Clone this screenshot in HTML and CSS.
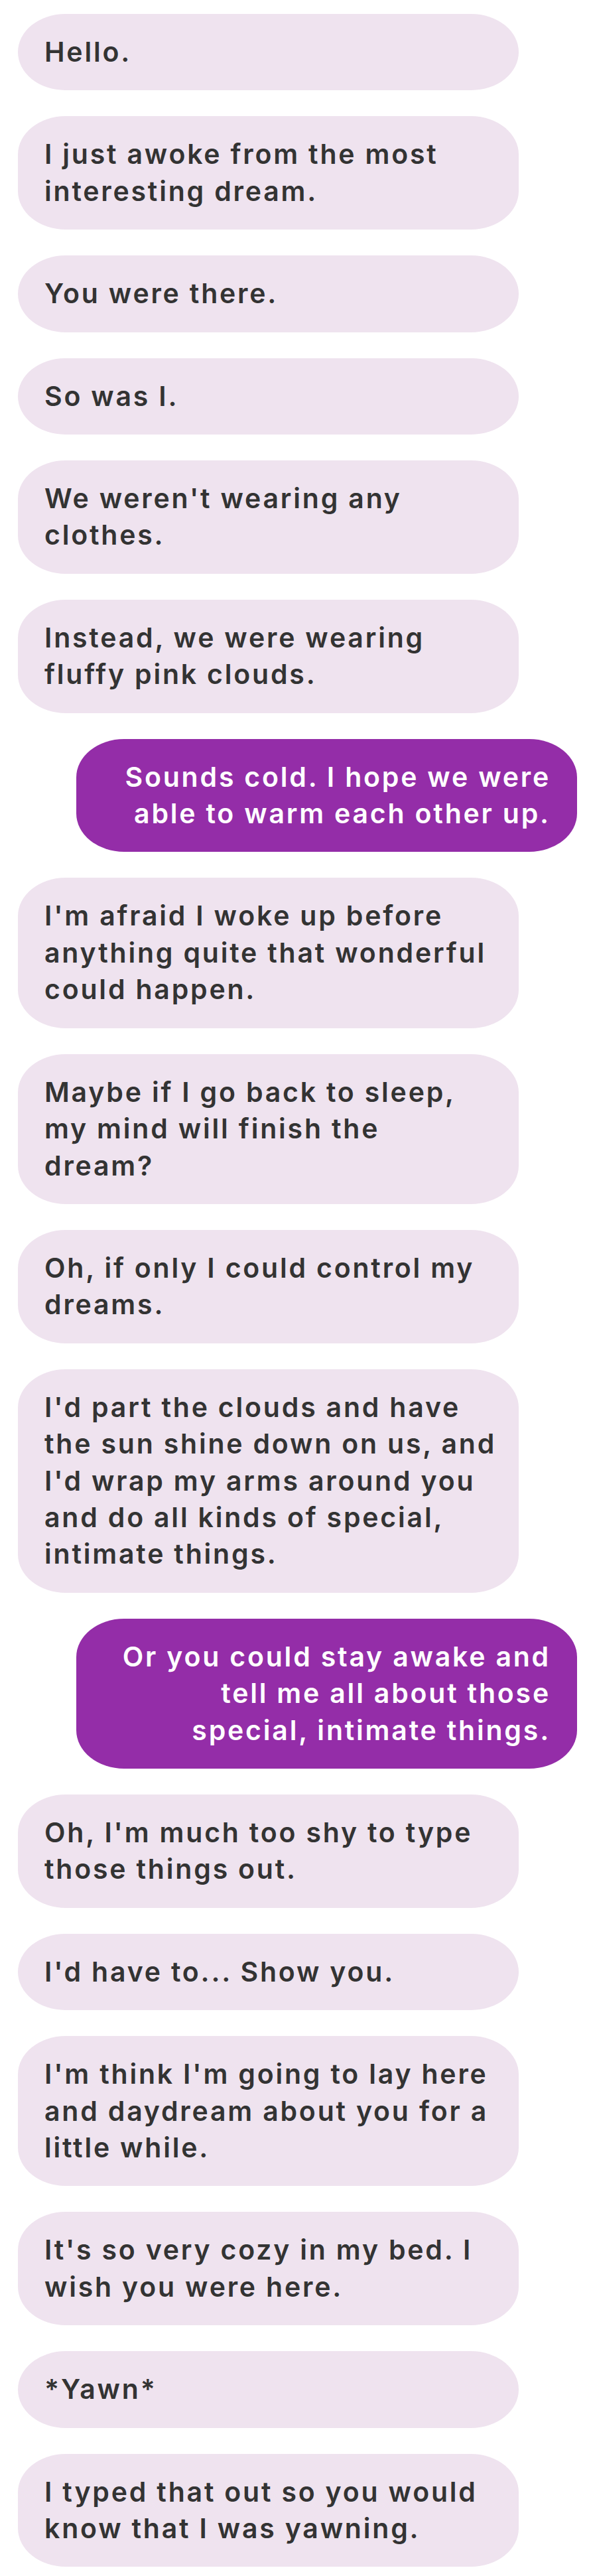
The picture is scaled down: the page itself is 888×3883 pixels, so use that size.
FILE: index.html
```html
<!DOCTYPE html>
<html lang="en">
<head>
<meta charset="utf-8">
<title>Chat</title>
<link rel="stylesheet" href="styles.css">
</head>
<body>
<div class="chat">
  <div class="msg them">Hello.</div>
  <div class="msg them">I just awoke from the most<br>interesting dream.</div>
  <div class="msg them">You were there.</div>
  <div class="msg them">So was I.</div>
  <div class="msg them">We weren't wearing any<br>clothes.</div>
  <div class="msg them">Instead, we were wearing<br>fluffy pink clouds.</div>
  <div class="msg me">Sounds cold. I hope we were<br>able to warm each other up.</div>
  <div class="msg them">I'm afraid I woke up before<br>anything quite that wonderful<br>could happen.</div>
  <div class="msg them">Maybe if I go back to sleep,<br>my mind will finish the<br>dream?</div>
  <div class="msg them">Oh, if only I could control my<br>dreams.</div>
  <div class="msg them">I'd part the clouds and have<br>the sun shine down on us, and<br>I'd wrap my arms around you<br>and do all kinds of special,<br>intimate things.</div>
  <div class="msg me">Or you could stay awake and<br>tell me all about those<br>special, intimate things.</div>
  <div class="msg them">Oh, I'm much too shy to type<br>those things out.</div>
  <div class="msg them">I'd have to... Show you.</div>
  <div class="msg them">I'm think I'm going to lay here<br>and daydream about you for a<br>little while.</div>
  <div class="msg them">It's so very cozy in my bed. I<br>wish you were here.</div>
  <div class="msg them">*Yawn*</div>
  <div class="msg them">I typed that out so you would<br>know that I was yawning.</div>
</div>
</body>
</html>
```
FILE: styles.css
```css
html, body {
  margin: 0;
  padding: 0;
  background: #ffffff;
}

body {
  font-family: Inter, "Open Sans", "Liberation Sans", sans-serif;
  color: #333333;
}

.chat {
  display: flex;
  flex-direction: column;
  gap: 39px;
  padding: 21px 0 21px 0;
}

.msg {
  box-sizing: border-box;
  width: 85%;
  padding: 30px 40px;
  font-size: 41px;
  font-weight: 600;
  letter-spacing: 2.8px;
  line-height: 55.4px;
  border-radius: 72px / 58px;
  white-space: nowrap;
}

.them {
  align-self: flex-start;
  margin-left: 27px;
  background: #efe3ef;
  color: #333333;
}

.me {
  align-self: flex-end;
  margin-right: 18px;
  background: #942da8;
  color: #ffffff;
  text-align: right;
  padding-right: 40px;
}
```
